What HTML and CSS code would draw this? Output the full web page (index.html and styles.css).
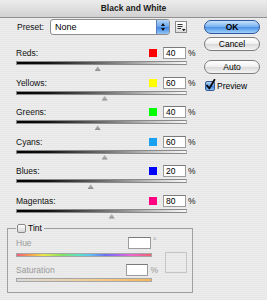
FILE: index.html
```html
<!DOCTYPE html>
<html>
<head>
<meta charset="utf-8">
<link rel="stylesheet" href="styles.css">
</head>
<body>
<div class="window">
  <div class="titlebar">Black and White</div>
  <div class="body">
    <div class="left">
      <div class="preset-row">
        <span class="preset-label">Preset:</span>
        <div class="select">
          <span class="select-value">None</span>
          <span class="stepper">
            <svg width="12" height="14" viewBox="0 0 12 14"><path d="M4 6 L6 3 L8 6 Z" fill="#111"/><path d="M4 8 L6 11 L8 8 Z" fill="#111"/></svg>
          </span>
        </div>
        <span class="menu-btn">
          <svg width="10" height="10" viewBox="0 0 10 10"><path d="M1.5 2.5 H6.5 M1.5 4.5 H6.5 M1.5 6.5 H5" stroke="#333" stroke-width="1"/><path d="M6 7 L9.5 7 L7.75 9.2 Z" fill="#111"/></svg>
        </span>
      </div>
      <div class="sliders">
        <div class="slider-row">
          <div class="slider-top"><span class="slider-label">Reds:</span><span class="swatch swatch-red"></span><span class="value-box">40</span><span class="unit">%</span></div>
          <div class="track"></div>
          <div class="thumb" style="margin-left:78.7px"></div>
        </div>
        <div class="slider-row">
          <div class="slider-top"><span class="slider-label">Yellows:</span><span class="swatch swatch-yellow"></span><span class="value-box">60</span><span class="unit">%</span></div>
          <div class="track"></div>
          <div class="thumb" style="margin-left:85.7px"></div>
        </div>
        <div class="slider-row">
          <div class="slider-top"><span class="slider-label">Greens:</span><span class="swatch swatch-green"></span><span class="value-box">40</span><span class="unit">%</span></div>
          <div class="track"></div>
          <div class="thumb" style="margin-left:78.7px"></div>
        </div>
        <div class="slider-row">
          <div class="slider-top"><span class="slider-label">Cyans:</span><span class="swatch swatch-cyan"></span><span class="value-box">60</span><span class="unit">%</span></div>
          <div class="track"></div>
          <div class="thumb" style="margin-left:85.7px"></div>
        </div>
        <div class="slider-row">
          <div class="slider-top"><span class="slider-label">Blues:</span><span class="swatch swatch-blue"></span><span class="value-box">20</span><span class="unit">%</span></div>
          <div class="track"></div>
          <div class="thumb" style="margin-left:71.7px"></div>
        </div>
        <div class="slider-row">
          <div class="slider-top"><span class="slider-label">Magentas:</span><span class="swatch swatch-magenta"></span><span class="value-box">80</span><span class="unit">%</span></div>
          <div class="track"></div>
          <div class="thumb" style="margin-left:92.7px"></div>
        </div>
      </div>
      <fieldset class="tint">
        <legend class="tint-legend"><span class="checkbox"></span><span class="tint-title">Tint</span></legend>
        <div class="tint-body">
          <div class="tint-controls">
            <div class="tint-row"><span class="tint-label">Hue</span><span class="value-box"></span><span class="tint-unit deg">°</span></div>
            <div class="bar hue-bar"></div>
            <div class="tint-row sat-row"><span class="tint-label">Saturation</span><span class="value-box"></span><span class="tint-unit">%</span></div>
            <div class="bar sat-bar"></div>
          </div>
          <div class="tint-preview"></div>
        </div>
      </fieldset>
    </div>
    <div class="right">
      <div class="btn btn-ok">OK</div>
      <div class="btn btn-cancel">Cancel</div>
      <div class="btn btn-auto">Auto</div>
      <div class="preview">
        <span class="checkbox checked">
          <svg width="11" height="12" viewBox="0 0 11 12"><path d="M2 6.5 L4.3 9.5 L9.5 0.8" fill="none" stroke="#0b0b0b" stroke-width="1.8" stroke-linecap="round" stroke-linejoin="round"/></svg>
        </span>
        <span class="preview-text">Preview</span>
      </div>
    </div>
  </div>
</div>
</body>
</html>
```
FILE: styles.css
```css
html, body {
  margin: 0;
  padding: 0;
}
body {
  font-family: "Liberation Sans", Arial, sans-serif;
  font-size: 8.5px;
  color: #111;
}
.window {
  width: 267px;
  height: 300px;
  overflow: hidden;
  background: repeating-linear-gradient(to bottom, #ededed 0, #ededed 1px, #e6e6e6 1px, #e6e6e6 2px);
}
.titlebar {
  height: 17px;
  line-height: 17px;
  border-bottom: 1px solid #8f8f8f;
  background: linear-gradient(#ececec, #d2d2d2);
  text-align: center;
  font-weight: bold;
  font-size: 8.5px;
  color: #1a1a1a;
}
.body {
  display: flex;
}
.left {
  width: 190px;
  margin-left: 7px;
}
.preset-row {
  margin-top: 1px;
  height: 16px;
  padding-left: 10px;
  display: flex;
  align-items: center;
}
.preset-label {
  width: 33px;
}
.select {
  width: 120px;
  height: 16px;
  box-sizing: border-box;
  display: flex;
  border: 1px solid #8e8e8e;
  border-radius: 3px;
  background: #fff;
  overflow: hidden;
}
.select-value {
  flex: 1;
  padding-left: 4px;
  line-height: 14px;
  font-size: 9px;
  color: #000;
}
.stepper {
  width: 12px;
  height: 14px;
  border-left: 1px solid #5b80c0;
  background: linear-gradient(#b3d5f7, #6aa5ec 48%, #3e85e2 52%, #93c6f6);
  display: flex;
}
.menu-btn {
  margin-left: 5px;
  width: 12px;
  height: 12px;
  box-sizing: border-box;
  border: 1px solid #8a8a8a;
  background: linear-gradient(#ffffff, #dcdcdc);
  display: flex;
}
.sliders {
  margin-top: 12px;
}
.slider-row {
  height: 29.5px;
  width: 180px;
  padding-left: 9px;
}
.slider-top {
  height: 12px;
  display: flex;
  align-items: center;
}
.slider-label {
  flex: 1;
}
.swatch {
  width: 8px;
  height: 8px;
  margin-right: 6px;
}
.swatch-red { background: #ff0000; }
.swatch-yellow { background: #ffff00; }
.swatch-green { background: #00ff00; }
.swatch-cyan { background: #1aa0f0; }
.swatch-blue { background: #0000ff; }
.swatch-magenta { background: #ff0080; }
.value-box {
  width: 23px;
  height: 12px;
  box-sizing: border-box;
  border: 1px solid #9c9c9c;
  border-top-color: #7a7a7a;
  background: #fff;
  padding-left: 2px;
  line-height: 10px;
  color: #000;
}
.unit {
  margin-left: 2px;
  width: 8px;
}
.track {
  margin-top: 2px;
  width: 171px;
  height: 4px;
  box-sizing: border-box;
  border: 1px solid #8a8a8a;
  border-right-color: #b0b0b0;
  background: linear-gradient(to right, #000 0%, #111 18%, #6a6a6a 50%, #bdbdbd 78%, #fafafa 100%);
}
.thumb {
  margin-top: 1px;
  width: 6px;
  height: 5px;
  background: linear-gradient(#c4c4c4, #8a8a8a);
  clip-path: polygon(50% 0, 100% 100%, 0 100%);
}
.tint {
  margin: 0;
  width: 186px;
  box-sizing: border-box;
  border: 1px solid #a0a0a0;
  padding: 0 5px 10px 8px;
  min-width: 0;
}
.tint-legend {
  padding: 0 2px 0 1px;
  height: 9px;
  display: flex;
  align-items: center;
  line-height: 9px;
}
.checkbox {
  width: 9px;
  height: 9px;
  box-sizing: border-box;
  border: 1px solid #8a8a8a;
  border-radius: 2px;
  background: linear-gradient(#ffffff, #d6d6d6);
  display: inline-block;
}
.tint-title {
  margin-left: 2px;
  color: #000;
}
.tint-body {
  margin-top: 4px;
  display: flex;
}
.tint-controls {
  width: 142px;
}
.tint-row {
  height: 12px;
  display: flex;
  align-items: center;
}
.tint-label {
  width: 112px;
  color: #9a9a9a;
}
.tint-unit {
  margin-left: 2px;
  color: #9a9a9a;
}
.deg {
  align-self: flex-start;
  line-height: 8px;
}
.bar {
  height: 4px;
  width: 136px;
  box-sizing: border-box;
  border: 1px solid #a6a6a6;
}
.hue-bar {
  margin-top: 4px;
  background: linear-gradient(to right, #f0607a 0%, #f5a84e 11%, #ece74a 20%, #86e25c 33%, #5ee0c8 46%, #60bef2 55%, #6a70f0 66%, #a866f0 75%, #ee66cc 86%, #f06272 100%);
}
.sat-row {
  margin-top: 6px;
  height: 13px;
}
.sat-bar {
  margin-top: 2px;
  background: linear-gradient(to right, #dadada, #f4cc8e 60%, #f6b658 100%);
}
.tint-preview {
  margin-left: 7px;
  margin-top: 15px;
  width: 22px;
  height: 21px;
  box-sizing: border-box;
  border: 1px solid #c6c6c6;
}
.right {
  margin-left: 7px;
  width: 56px;
  padding-top: 2px;
  display: flex;
  flex-direction: column;
}
.btn {
  height: 14px;
  box-sizing: border-box;
  border: 1px solid #7c7c7c;
  border-radius: 7px;
  background: linear-gradient(#ffffff, #f1f1f1 45%, #dadada 55%, #f6f6f6);
  text-align: center;
  line-height: 12px;
  color: #000;
}
.btn-ok {
  border-color: #2d55a0;
  background: linear-gradient(#c8e2fb, #7db5ef 45%, #4e93e6 55%, #a2d2fb);
  font-weight: bold;
}
.btn-cancel {
  margin-top: 3px;
}
.btn-auto {
  margin-top: 9px;
}
.preview {
  margin-top: 6px;
  height: 11px;
  display: flex;
  align-items: center;
}
.checkbox.checked {
  margin-left: 1px;
  width: 10px;
  height: 10px;
  border-color: #3a5c98;
  background: linear-gradient(#b7d8f8, #5d9de8 50%, #3f84df 55%, #8cc2f4);
  position: relative;
}
.checkbox.checked svg {
  position: absolute;
  left: -1px;
  top: -3px;
}
.preview-text {
  margin-left: 2px;
  color: #000;
}
```
